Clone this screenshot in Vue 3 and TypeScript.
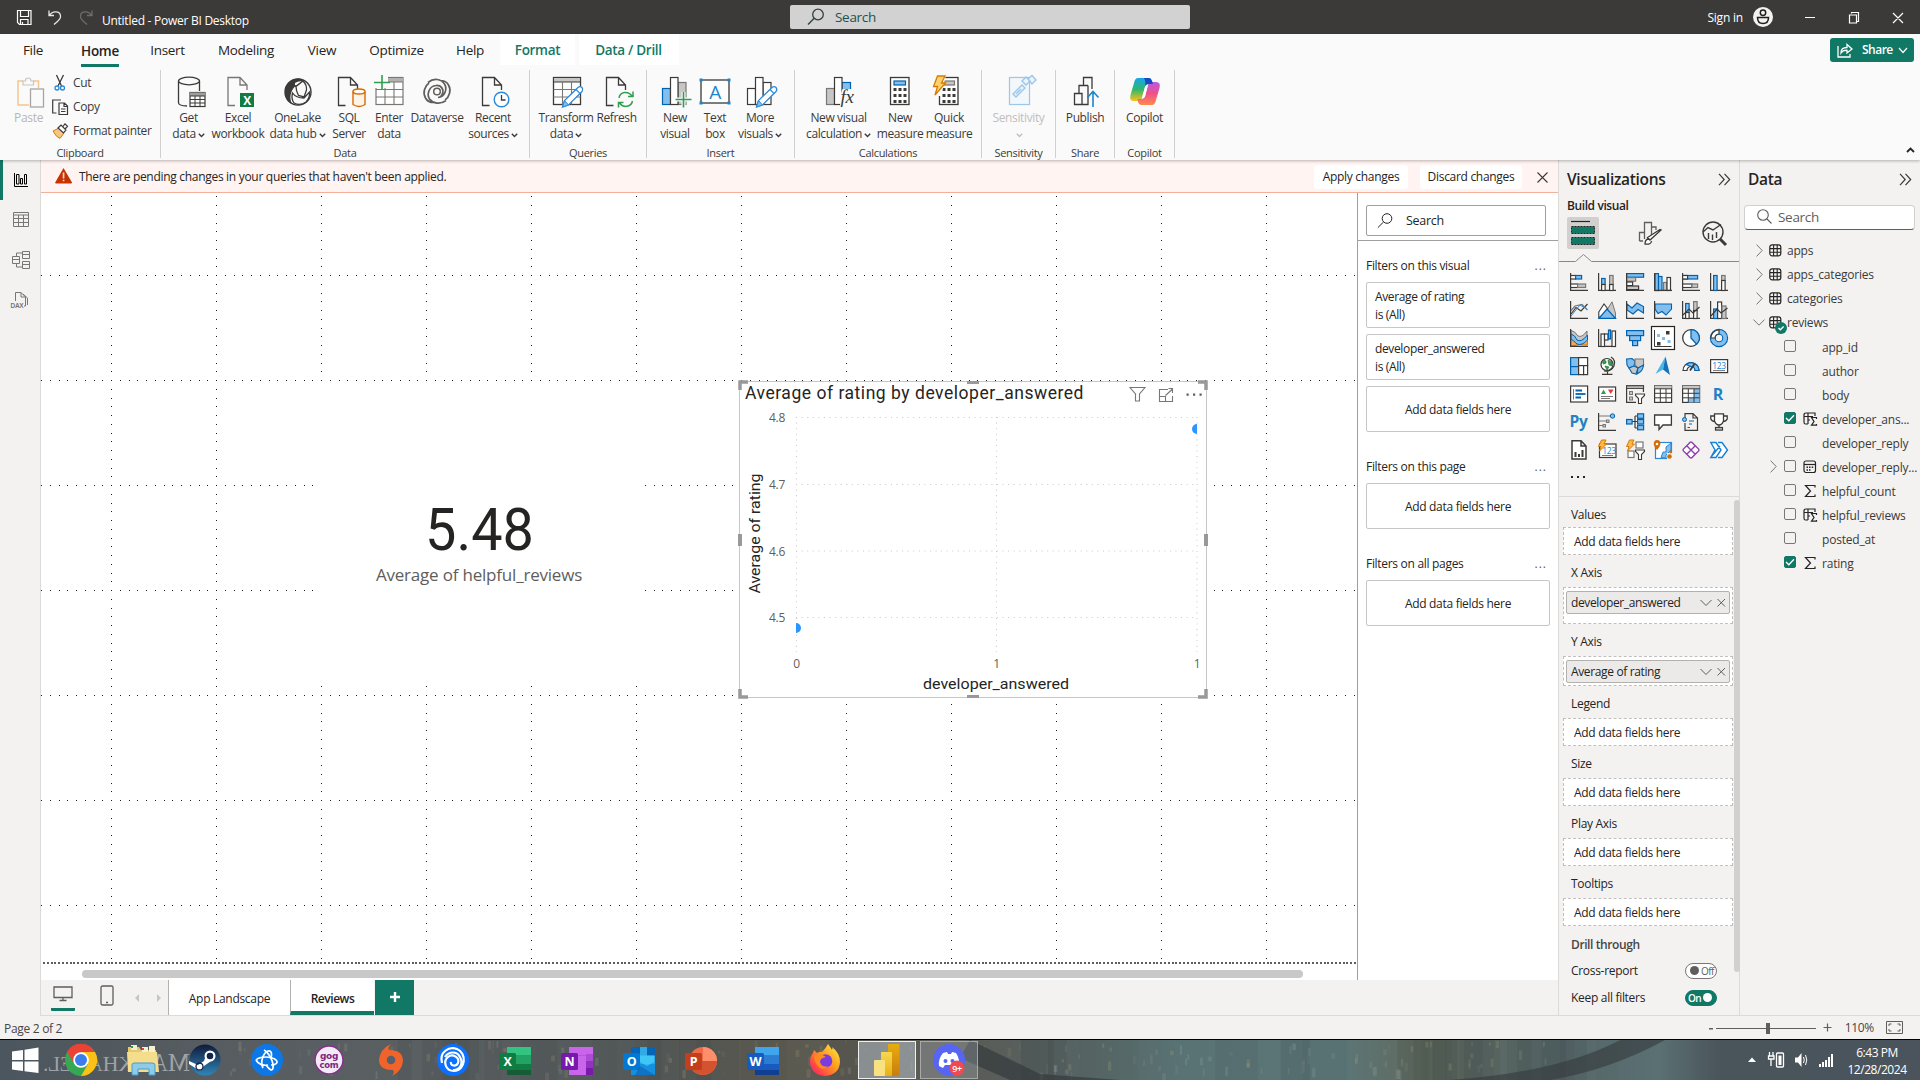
<script setup lang="ts">
interface RibbonButton { label: string[]; icon: string; w: number; caret?: boolean; off?: boolean }
interface RibbonGroup { name: string; w: number; pad: number; buttons: RibbonButton[] }
interface Field { name: string; checked?: boolean; icon?: string; expand?: boolean }
interface Well { label: string; value?: string; h: number }

const K = '#3b3a39'
const BL = '#83beec'
const BD = '#0063b1'
const GR = '#c8c6c4'
const GD = '#797775'

const rc = (x: number, y: number, w: number, h: number, f = 'none', s = K, sw = 1.2): string =>
  `<rect x="${x}" y="${y}" width="${w}" height="${h}" fill="${f}" stroke="${s}" stroke-width="${sw}"/>`
const ln = (d: string, s = K, sw = 1.2, f = 'none'): string =>
  `<path d="${d}" fill="${f}" stroke="${s}" stroke-width="${sw}"/>`

const sheet = (x: number, c = K): string => ln(`M${x + 7} 29.5H${x}V1.5H${x + 12}L${x + 19} 9V14M${x + 12} 1.5V9H${x + 19}`, c, 1.3)
const pencil = ln('M12.5 31L14.5 24.5L28 11.5Q30 9.7 32 11.5Q33.5 13.5 32 15.5L18.5 29Z', '#2b88d8', 1.3, '#fff') + ln('M12.5 31L14.5 24.5L18.5 29Z', '#2b88d8', 1, '#83beec') + ln('M26 13.5L30 17.5', '#2b88d8', 1.1)

const big: Record<string, string> = {
  get:
    ln('M5.5 5V27Q6 29.8 14 30M26.5 5V15', K, 1.3) + '<ellipse cx="16" cy="5" rx="10.5" ry="3.8" fill="#fafafa" stroke="#3b3a39" stroke-width="1.3"/>' +
    rc(17, 16.5, 15, 14, '#fff', K, 1.2) + '<rect x="17" y="16.5" width="15" height="3.5" fill="#a19f9d"/>' + ln('M17 20H32M17 23.5H32M17 27H32M22 20V30.5M27 20V30.5', K, 1),
  excel: sheet(6, GD) + '<rect x="18" y="17" width="14" height="14" fill="#107c41"/><text x="25" y="28.5" text-anchor="middle" font-family="Open Sans" font-weight="700" font-size="12" fill="#fff">X</text>',
  lake:
    '<circle cx="16" cy="16" r="13" fill="#fafafa" stroke="#3b3a39" stroke-width="1.4"/><path d="M16 2.5C8 3 3 9 3 16C3 22 6 26.5 10 28C7 22 8.5 15 13 10.500L21 4.500C19.500 3 18 2.500 16 2.500Z" fill="#3b3a39"/><path d="M12.500 6.500Q17 3.500 21 5L13.500 10.500Q11.500 9 12.500 6.500ZM14 10.500L21 5Q25 9 24.500 14L22 21L16.500 19.500Q14 15 14 10.500ZM10.500 17Q14 22 22 22L27.500 16Q28 22 24 26Q18 30 12 27Q9 23 10.500 17Z" fill="#fafafa" stroke="#3b3a39" stroke-width="1.3"/>',
  sql: sheet(5.5) + ln('M20 15.5V28.5Q26 32.5 32 28.5V15.5', '#d86b00', 1.4, '#fdf3e8') + '<ellipse cx="26" cy="15.5" rx="6" ry="2.5" fill="#fff" stroke="#d86b00" stroke-width="1.4"/>',
  enter:
    rc(3, 1.5, 27, 27, '#fff', GD) + '<rect x="9" y="2" width="21" height="4" fill="#b3b0ad"/>' + ln('M3 6H30M3 13.5H30M3 21H30M12 6V28.5M21 6V28.5', GD, 1.1) + '<path d="M1 0H15V12H1Z" fill="#fafafa"/>' + ln('M9 -1V14M1 6.5H17', '#2f9e4f', 1.6),
  dv:
    ln('M25 24.5C19 29 12 27.5 8.500 23C5.500 18.500 8 10 15 9.500M7 6.500C13 1.500 20 3 23.500 8C26.500 13 24 21 17 21.500M15 9.500C20 9 23 13 21.500 17.500C20.500 20.500 18.500 21.500 17 21.500M8 7C3.500 10 1.500 17 4.500 22C6 25 9.500 26.500 13 26.500M24 24C28.500 21 30.500 14 27.500 9C26 6 22.500 4.500 19 4.500', '#605e5c', 1.7) + '<circle cx="16" cy="15.5" r="3.3" fill="none" stroke="#605e5c" stroke-width="1.5"/>',
  recent: sheet(5.5) + '<circle cx="24.5" cy="23.5" r="7.3" fill="#fff" stroke="#2b88d8" stroke-width="1.4"/>' + ln('M24.5 19V24H28.5', K, 1.3),
  transform:
    rc(3.5, 1.5, 27, 27, '#fff', K, 1.3) + '<rect x="3.5" y="1.5" width="27" height="4.5" fill="#c8c6c4" stroke="#3b3a39" stroke-width="1"/>' + ln('M3.5 13.5H30.5M3.5 21H30.5M12.5 6V28.5M21.5 6V28.5', GD, 1.1) + pencil,
  refresh: sheet(5.5) + '<path d="M16 15H33V32H16Z" fill="#fafafa"/>' + ln('M18 22C19 15.5 27 14.5 31 20M32 15.5V20.5H27M31.5 25C30 31.5 22 32 18.5 27M17.5 31.5V26.5H22.5', '#2f9e4f', 1.5),
  newv: rc(3.5, 12.5, 8, 16, BL, BD) + rc(19, 6.5, 8, 22, GR, GD) + rc(11.5, 1.5, 7.5, 27, '#fff', K) + ln('M24.5 16V31.5M16.5 23.5H32.5', '#fafafa', 4) + ln('M24.5 16V31.5M16.5 23.5H32.5', '#2f9e4f', 1.6),
  text: rc(2, 4, 28, 23, '#fff', K, 1.3) + '<path d="M0.5 2.5h3v3h-3zM28.5 2.5h3v3h-3zM0.5 25.5h3v3h-3zM28.5 25.5h3v3h-3z" fill="#1a86d0"/><text x="16" y="22.500" text-anchor="middle" font-family="Open Sans" font-size="19" fill="#1a86d0">A</text>',
  morev: rc(3.5, 12.5, 8, 16, '#fff', K) + rc(19, 6.5, 8, 22, '#fff', K) + rc(11.5, 1.5, 7.5, 27, '#fff', K) + pencil,
  calc: rc(3.5, 12.5, 8, 16, GR, GD) + rc(19, 6.5, 8.5, 11, BL, BD) + rc(11.5, 1.5, 7.5, 27, '#fff', K) + '<path d="M19.500 13H32V31H17V20Z" fill="#fafafa"/><text x="17.500" y="27" font-family="Liberation Serif" font-style="italic" font-size="19" fill="#3b3a39">fx</text>',
  meas: rc(6.5, 1.5, 18.5, 27, '#fff', K, 1.3) + rc(10, 5, 11.5, 4, BL, BD, 1.2) + '<path d="M9.5 12h3v3h-3zM14.5 12h3v3h-3zM19.5 12h3v3h-3zM9.5 18h3v3h-3zM14.5 18h3v3h-3zM19.5 18h3v3h-3zM9.5 24h3v3h-3zM14.5 24h3v3h-3zM19.5 24h3v3h-3z" fill="#3b3a39"/>',
  quick: rc(6.5, 1.5, 18.5, 27, '#fff', K, 1.3) + rc(11, 5, 10.5, 4, GR, GD, 1.2) + '<path d="M9.5 12h3v3h-3zM14.5 12h3v3h-3zM19.5 12h3v3h-3zM9.5 18h3v3h-3zM14.5 18h3v3h-3zM19.5 18h3v3h-3zM9.5 24h3v3h-3zM14.5 24h3v3h-3zM19.5 24h3v3h-3z" fill="#3b3a39"/><path d="M-1 -1H13L8 20H0Z" fill="#fafafa"/>' + ln('M4.5 0H12L8.5 7H12.5L2 19L4.5 10.5H0.5Z', '#d87a00', 1.3, '#fdd26e'),
  sens: '<g opacity=".45">' + rc(6.5, 1.5, 20, 27, '#e8f4fc', '#2b88d8') + ln('M10 18L19 9L22 12L13 21ZM19 5L23 1L27 5L23 9ZM25 3L29 -0.5L33 4L29 8ZM13 18L18 13', '#2b88d8', 1.4, '#dceefb') + '</g>',
  publish: ln('M5.5 28.5V17.5H13V28.5ZM10 17V9.5H19M19 9.5V28.5H13M14.5 9V1.5H23V13', K, 1.3) + ln('M24 31V16M18.5 21.5L24 15.5L29.5 21.5', '#1a86d0', 1.6),
  copilot:
    '<defs><linearGradient id="cpa" x1="0" y1="0" x2="0" y2="1"><stop offset="0" stop-color="#18a5e8"/><stop offset=".5" stop-color="#2fb86c"/><stop offset="1" stop-color="#ffc21a"/></linearGradient><linearGradient id="cpb" x1="0" y1="0" x2="0" y2="1"><stop offset="0" stop-color="#b55be0"/><stop offset=".5" stop-color="#f0508a"/><stop offset="1" stop-color="#ff8a4a"/></linearGradient></defs><path d="M9 2H20Q22 2 23 5L24 8H20Q17 8 16 11L13 22Q12 25 9 25H5Q0 25 1.5 19L5 7Q6 2 9 2Z" fill="url(#cpa)"/><path d="M23 29H12Q10 29 9 26L8.5 23H12Q15 23 16 20L19 9Q20 6 23 6H27Q32 6 30.5 12L27 24Q26 29 23 29Z" fill="url(#cpb)"/><path d="M15 2H20Q22 2 23 5L24 8H20Q17 8 16 10Q17 5 15 2Z" fill="#1648c8"/><path d="M13.5 20L16 11Q17 8.500 19 8.500L16.500 19Q15.500 22.500 13 22.500Z" fill="#fff"/>',
}

const groups: RibbonGroup[] = [
  { name: 'Data', w: 368, pad: 4, buttons: [
    { label: ['Get', 'data'], icon: 'get', w: 47, caret: true }, { label: ['Excel', 'workbook'], icon: 'excel', w: 52 },
    { label: ['OneLake', 'data hub'], icon: 'lake', w: 67, caret: true }, { label: ['SQL', 'Server'], icon: 'sql', w: 36 },
    { label: ['Enter', 'data'], icon: 'enter', w: 44 }, { label: ['Dataverse'], icon: 'dv', w: 52 },
    { label: ['Recent', 'sources'], icon: 'recent', w: 60, caret: true }] },
  { name: 'Queries', w: 116, pad: 10, buttons: [
    { label: ['Transform', 'data'], icon: 'transform', w: 52, caret: true }, { label: ['Refresh'], icon: 'refresh', w: 49 }] },
  { name: 'Insert', w: 147, pad: 7, buttons: [
    { label: ['New', 'visual'], icon: 'newv', w: 42 }, { label: ['Text', 'box'], icon: 'text', w: 38 },
    { label: ['More', 'visuals'], icon: 'morev', w: 52, caret: true }] },
  { name: 'Calculations', w: 186, pad: 6, buttons: [
    { label: ['New visual', 'calculation'], icon: 'calc', w: 75, caret: true }, { label: ['New', 'measure'], icon: 'meas', w: 48 },
    { label: ['Quick', 'measure'], icon: 'quick', w: 50 }] },
  { name: 'Sensitivity', w: 73, pad: 0, buttons: [{ label: ['Sensitivity', ''], icon: 'sens', w: 73, caret: true, off: true }] },
  { name: 'Share', w: 58, pad: 0, buttons: [{ label: ['Publish'], icon: 'publish', w: 58 }] },
  { name: 'Copilot', w: 59, pad: 0, buttons: [{ label: ['Copilot'], icon: 'copilot', w: 59 }] },
]

const ax = ln('M.6 0V17.4H18', K, 1.2)
const bolt = ln('M3.5 -1H8L6 3H8.5L1.5 10L3 5.5H.5Z', '#d87a00', 1, '#fdb94e')
const funnel = ln('M9.5 9H18.5V10.5L15.5 13.5V18.5H12.5V13.5L9.5 10.5Z', K, 1.1, '#fff')

const visuals: string[] = [
  ax + rc(.6, 2.5, 5, 3.5, '#fff') + rc(5.6, 2.5, 6, 3.5, BL, BD) + rc(.6, 11, 7, 3.5, '#fff') + rc(7.6, 11, 8, 3.5, GR, GD),
  ax + rc(3.6, 5.5, 3.5, 6, BL, BD) + rc(3.6, 11.5, 3.5, 6, '#fff') + rc(11.6, 2.5, 3.5, 9, GR, GD) + rc(11.6, 11.5, 3.5, 6, '#fff'),
  rc(.6, .6, 17, 3.6, BL, BD) + rc(.6, 4.6, 9, 3.6, GR, GD) + rc(.6, 9, 6, 3.6, '#fff') + rc(.6, 13, 12, 3.6, GR, K) + ax,
  rc(1, .6, 3.5, 17, BL, BD) + rc(4.5, 3.5, 3.5, 14, BL, BD) + rc(9.5, 9.5, 3.5, 8, GR, GD) + rc(13, 4.5, 3.5, 13, '#fff') + ax,
  ax + rc(.6, 2.5, 15, 3.5, BL, BD) + rc(.6, 2.5, 5, 3.5, '#fff') + rc(.6, 11, 9.5, 3.5, '#fff') + rc(10, 11, 5.6, 3.5, GR, GD),
  ax + rc(3.6, 2.5, 3.5, 15, BL, BD) + rc(11.6, 2.5, 3.5, 5, GR, GD) + rc(11.6, 7.5, 3.5, 10, '#fff'),
  ax + ln('M1 13L6 6.5L11 10L17.5 3', K) + ln('M1 9.5L5 5L12 3.5L17.5 9', GD) + ln('M1 15L5 10L10 4L17 8', '#2b88d8', 1),
  ln('M9.5 8L14 .8L17.5 12V17.4H14Z', GD, 1, GR) + ln('M.8 11L6 3L9.5 7.5L7 12L.8 17Z', K, 1.1, '#fff') + ln('M1 17.4L9 8L17.5 17.4Z', BD, 1.2, BL),
  ln('M1 3L6 7L11 2L17.5 5.5V12L12 8.5L7 13L1 9Z', BD, 1.1, BL) + ax,
  ln('M1 3H17.5V8L12 14L8 10.5L4 12.5L1 8Z', BD, 1.1, BL) + ax,
  ax + rc(3.6, 2.5, 3.5, 9, BL, BD) + rc(11.6, .6, 3.5, 9, GR, GD) + rc(3.6, 11.5, 3.5, 6, '#fff') + rc(11.6, 9.5, 3.5, 8, '#fff') + ln('M1 14L7 8L11 12L17.5 6', K),
  ax + rc(3.6, 8, 4, 9.5, BL, BD) + rc(7.6, 1, 4, 16.5, '#fff') + rc(12, 5, 4, 12.5, GR, GD) + ln('M1 15L7 8L11 12L17.5 7', K),
  ln('M1 1.5Q5 2 8 7Q12 9 17 2V7Q13 13 9 12Q5 11 1 7Z', GD, 1, GR) + ln('M1 9Q6 9 8 14Q12 16 17.5 9V16Q10 15 1 17Z', '#d87a00', 1, '#f7a94a') + ln('M1 5Q5 6 7 11Q11 14 17.5 6V11Q12 17 7 15Q4 12 1 10Z', BD, 1, BL) + ax,
  ax + rc(3, 5, 3.5, 12.5, '#fff') + rc(6.5, 5, 3.5, 6, '#fff') + rc(10.5, 1, 2, 9, BL, BD) + rc(14, 2, 3.5, 15.5, '#fff'),
  rc(.6, 1.6, 17, 5, BL, BD) + rc(3.6, 6.6, 11, 5, BL, BD) + rc(6.6, 11.6, 5, 5, BL, BD),
  rc(-2.5, -2.5, 23, 23, '#fff', '#252423', 1.2) + '<path d="M.5 1V17.5H17.5" fill="none" stroke="#3b3a39"/><path d="M12 2h3.5v3.5h-3.5zM3 13h3.5v3.5h-3.5z" fill="#3b3a39"/><path d="M3 5h3v3h-3zM8 8h3v3h-3zM13.5 11h3v3h-3z" fill="#83beec"/>',
  '<circle cx="9" cy="9" r="8.3" fill="#fff" stroke="#3b3a39" stroke-width="1.3"/>' + ln('M9 .7A8.3 8.3 0 0 1 14.5 15.2L9 9Z', BD, 1.3, BL),
  '<circle cx="9" cy="9" r="6.2" fill="none" stroke="#0063b1" stroke-width="6"/><circle cx="9" cy="9" r="6.2" fill="none" stroke="#83beec" stroke-width="3.8"/>' + ln('M9 .8A8.2 8.2 0 0 0 .8 9H5A4 4 0 0 1 9 5Z', K, 1.2, '#fff'),
  rc(.6, .6, 8, 9, BL, BD) + rc(.6, 9.6, 8, 8, BL, BD) + rc(8.6, .6, 9, 8, '#fff') + rc(8.6, 8.6, 5, 9, '#fff') + rc(13.6, 8.6, 4, 9, '#fff'),
  '<circle cx="9" cy="7.5" r="6" fill="#fff" stroke="#3b3a39" stroke-width="1.2"/><path d="M6 3Q9 4 8 6Q5 8 4.5 6ZM10 3L14 5L14 9L11 8ZM7 9L11 10L9 13Z" fill="#2f9e4f" stroke="#2f7e3f" stroke-width=".8"/>' + ln('M13 0Q18 3 16 9Q13 15 6 14M9.5 14V17M4 17.4H14.5', K),
  ln('M.6 2L6 1.5L9 4L8 9L3 11L1 8Z', BD, 1.1, BL) + ln('M9 2H17.5V9L12 11L9 8Z', GD, 1.1, GR) + ln('M3 11L8 9L12 11L10 17L6 16Z', BD, 1.1, GR) + ln('M12 11L17.5 8Q17 13 14 15L11 17Z', BD, 1.1, BL),
  '<path d="M11.5 -.5L1.5 17L9 12.5Z" fill="#4bb8e8"/><path d="M11.5 -.5L9 12.5L16 18Z" fill="#1372b8"/>',
  ln('M1 13.5A8 8 0 0 1 17 13.5H13A4 4 0 0 0 5 13.5Z', K, 1.2, '#fff') + ln('M4 7.5A8 8 0 0 1 17 13.5H13A4 4 0 0 0 9 9.5Z', BD, 1.1, BL) + ln('M8 13.5L12.5 7', K, 1.8),
  rc(.6, 2.6, 17, 13, '#fff', K) + '<text x="9" y="11.8" text-anchor="middle" font-family="Open Sans" font-size="8.5" fill="#1a86d0">123</text>' + ln('M3 13.6H15', GD, 1),
  rc(.6, 1, 17, 16, '#fff', K) + ln('M3.5 4V14.5', GD, 1) + ln('M5.5 5.5H12M5.5 12.5H11', BD, 1.8) + ln('M5.5 9H15.5', BD, 1.8),
  rc(.6, 2, 17, 14, '#fff', K) + '<path d="M3 9L5.500 4.500L8 9Z" fill="#2f9e4f"/><path d="M10 4.500H15.500L12.800 9Z" fill="#e0393e"/>' + ln('M3 11.5H15M3 13.5H12', GD, 1),
  ln('M10 17.4H.6V.8H17.4V7', K) + '<rect x=".6" y=".8" width="17" height="2.6" fill="#c8c6c4" stroke="#3b3a39"/>' + rc(3.5, 6.5, 3, 3, GR, GD, 1) + rc(3.5, 12, 3, 3, GR, GD, 1) + funnel,
  rc(.6, .8, 17, 16.6, '#fff', K) + '<rect x=".6" y=".8" width="17" height="3" fill="#c8c6c4"/>' + ln('M.6 3.8H17.6M.6 8.3H17.6M.6 12.8H17.6M6.3 3.8V17.4M12 3.8V17.4', K, 1),
  rc(.6, .8, 17, 16.6, '#fff', K) + '<rect x=".6" y=".8" width="17" height="3" fill="#c8c6c4"/><path d="M6.3 13H12V4H17.6V17.4H6.3Z" fill="#83beec"/>' + ln('M.6 3.8H17.6M.6 8.3H17.6M.6 12.8H17.6M6.3 3.8V17.4M12 3.8V17.4', K, 1),
  '<text x="8" y="14.500" text-anchor="middle" font-family="Open Sans" font-weight="700" font-size="16" fill="#2482c4">R</text>',
  '<text x="8.500" y="14" text-anchor="middle" font-family="Open Sans" font-weight="700" font-size="15.500" fill="#2482c4">Py</text>',
  ax + ln('M1 3H13M1 8H9M1 12.5H5', GD, 1) + '<circle cx="14.5" cy="3" r="2.2" fill="#83beec" stroke="#0063b1"/>' + rc(8.5, 7, 2.5, 2.5, GR, GD, 1) + rc(5, 11.5, 2.5, 2.5, GR, GD, 1),
  ln('M6 8.5H12M9 3V15M9 3H12M9 15H12', K) + rc(.6, 6.5, 5.5, 4.5, BL, BD) + rc(11.6, .8, 6, 4.5, BL, BD) + rc(11.6, 6.5, 6, 4.5, BL, BD) + rc(11.6, 12.3, 6, 4.5, BL, BD),
  ln('M.6 2H17.4V12H9L5 16.5V12H.6Z', K, 1.3, '#fff'),
  ln('M3 6V.6H11L15.5 5V17.4H3V10M11 .6V5H15.5', K) + '<circle cx="2.5" cy="6.5" r="2" fill="#83beec" stroke="#0063b1"/>' + ln('M7 8H12M7 11H10M5.5 14.5H8', BD, 1.2),
  ln('M4.5 .8H13.5V8Q12 12 9 12Q6 12 4.5 8ZM4.5 3H.8V6Q2 8.5 5 8.5M13.5 3H17.2V6Q16 8.5 13 8.5M9 12V15', K, 1.3, '#fff') + rc(5.5, 14.5, 7, 2.6, GR, K),
  ln('M2 18V-.2H11L16 5V18ZM11 -.2V5H16', K, 1.5, '#fff') + '<path d="M4.500 11h2v5h-2zM8 13h2v3h-2zM11.500 9h2v7h-2z" fill="#3b3a39"/>',
  rc(1.5, 3, 16.5, 13.5, '#fff', K) + '<text x="11" y="12.500" text-anchor="middle" font-family="Open Sans" font-size="8.500" fill="#1a86d0">123</text>' + ln('M4 14.5H15', GD, 1) + bolt,
  rc(10, 1, 7, 6, '#fff', GD) + rc(2, 10, 6, 6.5, '#fff', GD) + bolt + funnel,
  rc(1.5, 1.5, 16, 16, '#fff', '#2b88d8') + ln('M7 16.5L9 11H12V6L17 2V9L12 14V17Z', '#2b88d8', 1, BL) + '<path d="M3 -1Q6.5 -1 6.5 3Q6 6 3 9Q0 6 -.3 3Q0 -1 3 -1Z" fill="#d86b00"/><circle cx="3" cy="3" r="1.3" fill="#fff"/><path d="M13 12h6v7h-6z" fill="#f3f2f1"/><circle cx="15.5" cy="15.5" r="2.3" fill="#d86b00"/><circle cx="16.5" cy="11" r="1.4" fill="#d86b00"/>',
  ln('M7 2.5Q9 -.5 11 2.500L15.500 7Q18.500 9 15.500 11L11 15.500Q9 18.500 7 15.500L2.500 11Q-.5 9 2.500 7ZM5 5L13 13M13 5L5 13', '#8a3ea8', 1.4, '#fff'),
  ln('M.8 1.5H6L11 9L6 16.5H.8L5 9ZM8 1.5H12L17.5 9L12 16.5H8M1 16L10 5', '#1580d8', 1.4, '#fff'),
]

const tables = ['apps', 'apps_categories', 'categories']
const fields: Field[] = [
  { name: 'app_id' }, { name: 'author' }, { name: 'body' }, { name: 'developer_ans...', checked: true, icon: 'calc' },
  { name: 'developer_reply' }, { name: 'developer_reply...', icon: 'date', expand: true }, { name: 'helpful_count', icon: 'sum' },
  { name: 'helpful_reviews', icon: 'calc' }, { name: 'posted_at' }, { name: 'rating', checked: true, icon: 'sum' },
]
const fieldIcons: Record<string, string> = {
  sum: ln('M12 3.5V1.5H2.5L7.5 7L2.5 12.5H12V10.5', '#252423', 1.2),
  calc: ln('M5 12H2.5Q1 12 1 10V3Q1 1 3 1H12V4M1.5 4.5H10M5 1V12M5 8H7', '#252423', 1.2) + ln('M13.5 7V5.5H8.5L11 9.5L8.5 13.2H13.5V12', '#252423', 1.2),
  date: '<rect x="1" y="1" width="11.5" height="11.5" rx="2" fill="none" stroke="#252423" stroke-width="1.2"/>' + ln('M1 4.5H12.5', '#252423', 1.2) + '<path d="M3.5 6.5h1.5v1.5h-1.5zM6 6.5h1.5v1.5h-1.5zM8.7 6.5h1.5v1.5h-1.5zM3.5 9.3h1.5v1.5h-1.5zM6 9.3h1.5v1.5h-1.5z" fill="#252423"/>',
}
const tableIcon = '<rect x=".8" y=".8" width="11" height="11" rx="2.3" fill="none" stroke="#252423" stroke-width="1.2"/><path d="M4.6 1V12M8.2 1V12M1 4.6H12M1 8.2H12" stroke="#252423" stroke-width="1.1"/>'

const wells: Well[] = [
  { label: 'Values', h: 28 }, { label: 'X Axis', value: 'developer_answered', h: 37 },
  { label: 'Y Axis', value: 'Average of rating', h: 30 }, { label: 'Legend', h: 28 },
  { label: 'Size', h: 28 }, { label: 'Play Axis', h: 28 }, { label: 'Tooltips', h: 28 },
]
const filterSections = [
  { title: 'Filters on this visual', cards: ['Average of rating', 'developer_answered'] },
  { title: 'Filters on this page', cards: [] as string[] },
  { title: 'Filters on all pages', cards: [] as string[] },
]

// Snap-to-grid dots: 105px cells split in twelve steps.
const step = 105 / 12
const dots: string[] = []
for (let gx = 70; gx < 1316; gx += 105)
  for (let i = 0; i < 88; i++) dots.push(`M${gx} ${Math.round(3.25 + i * step)}h1v1h-1z`)
for (let gy = 82; gy < 768; gy += 105)
  for (let i = 0; i < 151; i++) dots.push(`M${Math.round(i * step)} ${gy}h1v1h-1z`)
const gridPath = dots.join('')

const office = (c1: string, c2: string, c3: string, c4: string, badge: string, letter: string): string =>
  `<path d="M8 3h24v8.5h-24z" fill="${c1}"/><path d="M8 11.5h24v8.5h-24z" fill="${c2}"/><path d="M8 20h24v6h-24z" fill="${c3}"/><path d="M8 26h24v5h-24z" fill="${c4}"/><rect x="0" y="9" width="17" height="17" rx="1.5" fill="${badge}"/><text x="8.5" y="22" text-anchor="middle" font-family="Open Sans" font-weight="700" font-size="12.5" fill="#fff">${letter}</text>`

const apps: { name: string; svg: string; state?: string }[] = [
  { name: 'start', svg: '<path d="M3 7.5L14 6V16H3ZM15.5 5.8L29.5 3.5V16H15.5ZM3 17.5H14V27L3 25.5ZM15.5 17.5H29.5V29L15.5 27.2Z" fill="#fff"/>' },
  { name: 'chrome', svg: '<circle cx="16" cy="16" r="16" fill="#34a853"/><path d="M2 8A16 16 0 0 1 30 8H16Z" fill="#ea4335"/><path d="M2 8L9.5 20L16 16V8Z" fill="#ea4335"/><path d="M30 8A16 16 0 0 1 16 32L23 20L22 8Z" fill="#fbc116"/><path d="M16 8H30L23 20Z" fill="#fbc116"/><circle cx="16" cy="16" r="7.8" fill="#fff"/><circle cx="16" cy="16" r="6" fill="#3b7ded"/>' },
  { name: 'explorer', svg: '<path d="M1 3H12L14 6H29V28H1Z" fill="#e5c96a"/><path d="M4 1H10V6H4ZM15 3H21V8H15ZM22 2H28V9H22Z" fill="#f5f0d0"/><path d="M4 2h2v2h-2z" fill="#25a045"/><path d="M15 4h2v2h-2z" fill="#d44"/><path d="M0 8H30L32 28H1Z" fill="#f4dd8c"/><path d="M5 31V21Q5 19 7 19H25Q28 19 28 21V31H22V25H11V31Z" fill="#8ccbea" stroke="#4a9cc8"/>' },
  { name: 'steam', svg: '<defs><linearGradient id="stm" x1="0" y1="0" x2="0" y2="1"><stop offset="0" stop-color="#101a3a"/><stop offset="1" stop-color="#2f86b8"/></linearGradient></defs><circle cx="16" cy="16" r="15.5" fill="url(#stm)"/><path d="M0 17L9 21L15 17L17 11L24 9L25 15L15 22L11 27L0 20Z" fill="#fff"/><circle cx="21" cy="12" r="5.5" fill="#fff"/><circle cx="21" cy="12" r="3.3" fill="#16244a"/><circle cx="10.5" cy="22.5" r="3.5" fill="none" stroke="#16244a" stroke-width="1.3"/>' },
  { name: 'battle', svg: '<circle cx="16" cy="16" r="16" fill="#0c78e8"/><g fill="none" stroke="#fff" stroke-width="1.7"><path d="M5 16C9 12 20 12 25 16C28 19 24 21 20 21"/><path d="M13 6C17 8 23 17 22 24C21 28 18 25 15 21"/><path d="M12 24C9 18 12 9 17 7C21 6 21 11 20 14"/><path d="M5 16C7 20 12 22 17 21"/></g>' },
  { name: 'gog', svg: '<circle cx="16" cy="16" r="14" fill="#f4e9f6" stroke="#86328a" stroke-width="1.5"/><text x="16" y="15" text-anchor="middle" font-family="DejaVu Sans" font-weight="700" font-size="9" fill="#7a2a80">gog</text><text x="16" y="23.5" text-anchor="middle" font-family="DejaVu Sans" font-weight="700" font-size="8.500" fill="#7a2a80">com</text>' },
  { name: 'origin', svg: '<path d="M16 0Q12 4 14 6Q28 6 28 17Q27 27 17 32Q20 28 18 26Q4 26 4 16Q5 5 16 0Z" fill="#f0642c"/><circle cx="16" cy="16" r="4.3" fill="#56606a"/>' },
  { name: 'ubisoft', svg: '<circle cx="16" cy="16" r="16" fill="#0b70ff"/><path d="M5 19C2 8 12 2 20 5C30 9 29 26 17 27C8 27 6 17 11 13C16 9 23 14 21 19C19 23 13 22 14 18M8 13C12 7 20 7 23 13C27 20 22 27 16 26" fill="none" stroke="#fff" stroke-width="2.2"/>' },
  { name: 'excel', svg: office('#33c481', '#21a366', '#107c41', '#185c37', '#107c41', 'X') },
  { name: 'onenote', svg: office('#ca64ea', '#ca64ea', '#ca64ea', '#ca64ea', '#7719aa', 'N') + '<path d="M25 10h7v7h-7z" fill="#ae4bd5"/><path d="M25 17h7v7h-7z" fill="#9332bf"/><path d="M25 24h7v7h-7z" fill="#7719aa"/>' },
  { name: 'outlook', svg: office('#0364b8', '#28a8ea', '#1490df', '#1490df', '#0078d4', 'O') + '<path d="M17 3h7v8.5h7V18L24 22L17 18Z" fill="#50d9ff" opacity=".6"/><path d="M17 22L32 31H12Z" fill="#1066b5" opacity=".7"/>' },
  { name: 'powerpoint', svg: '<circle cx="18" cy="17" r="14" fill="#ed6c47"/><path d="M18 3A14 14 0 0 1 32 17H18Z" fill="#ff8f6b"/><path d="M4.5 17H32A14 14 0 0 1 5 22Z" fill="#d35230"/><rect x="0" y="9" width="17" height="17" rx="1.5" fill="#c43e1c"/><text x="8.5" y="22" text-anchor="middle" font-family="Open Sans" font-weight="700" font-size="12.5" fill="#fff">P</text>' },
  { name: 'word', svg: office('#41a5ee', '#2b7cd3', '#185abd', '#103f91', '#185abd', 'W') },
  { name: 'firefox', svg: '<defs><linearGradient id="ffx" x1="1" y1="0" x2="0" y2="1"><stop offset="0" stop-color="#fff04a"/><stop offset=".45" stop-color="#ff9a1e"/><stop offset=".8" stop-color="#ff3d4e"/><stop offset="1" stop-color="#e0208a"/></linearGradient></defs><path d="M19 0Q22 4 23 6Q24 4 23 3Q31 9 31 18Q30 31 16 32Q2 31 1 18Q1 12 4 9L5 6L8 9Q12 7 13 8Q17 4 19 0Z" fill="url(#ffx)"/><circle cx="16.5" cy="17" r="6.8" fill="#7a3ce0"/><path d="M5 12Q11 8 17 13Q11 14 11 18Q13 24 20 22Q13 28 8 21Q5 17 5 12Z" fill="#ff8a1e"/>' },
  { name: 'powerbi', state: 'active', svg: '<defs><linearGradient id="pb1" x1="0" y1="0" x2="0" y2="1"><stop offset="0" stop-color="#e8ac0c"/><stop offset="1" stop-color="#c87c10"/></linearGradient><linearGradient id="pb2" x1="0" y1="0" x2="0" y2="1"><stop offset="0" stop-color="#f8d850"/><stop offset="1" stop-color="#e8b010"/></linearGradient></defs><rect x="17" y="0" width="11.5" height="32" rx="1" fill="url(#pb1)"/><rect x="10" y="8" width="11" height="24" rx="1" fill="url(#pb2)"/><rect x="3" y="16" width="11" height="16" rx="1" fill="#f9e080"/>' },
  { name: 'discord', state: 'open', svg: '<circle cx="16" cy="16" r="16" fill="#5865f2"/><path d="M10 9L14 8L15 10H18L19 8L23 9Q27 15 26 22L22 24L20 21H12L10 24L6 22Q5 15 10 9Z" fill="#fff"/><circle cx="12.5" cy="17" r="2" fill="#5865f2"/><circle cx="19.5" cy="17" r="2" fill="#5865f2"/><circle cx="24" cy="24" r="7.5" fill="#f04a50"/><text x="24" y="27.5" text-anchor="middle" font-family="Open Sans" font-weight="600" font-size="9" fill="#fff">9+</text>' },
]

// City skyline behind the taskbar: tall blocks and lit windows.
let seed = 7
const rnd = (): number => (seed = (seed * 16807) % 2147483647) / 2147483647
const lights = Array.from({ length: 150 }, () => ({
  x: 230 + rnd() * 1320, y: rnd() * 34, w: 1.5 + rnd() * 2.5, h: 3 + rnd() * 7, o: 0.05 + rnd() * 0.15, c: rnd() > 0.45 ? '#c9b487' : '#a9c4bf',
}))
const blocks = Array.from({ length: 30 }, () => ({ x: 380 + rnd() * 1240, w: 12 + rnd() * 50, o: 0.03 + rnd() * 0.09 }))

const yTicks = [{ v: '4.8', y: 36.5 }, { v: '4.7', y: 103.5 }, { v: '4.6', y: 170 }, { v: '4.5', y: 236.5 }]
</script>

<template>
  <div class="app">
    <header class="titlebar">
      <svg class="save" width="16" height="17" viewBox="0 0 16 17" v-html="ln('M1.5 1.5H15V15.5H3.5L1.5 13.5ZM4.5 1.5V7.5H12.5V1.5M4.5 15.5V10.5H12V15.5M6.5 13V15.5', '#fff', 1.2)" />
      <svg class="undo" width="16" height="17" viewBox="0 0 16 17" v-html="ln('M2 1.5V6.5H7M2.2 6.5C6 1 14 2 13.5 8C13.2 11 10 12.5 7 15.5', '#e8e8e8', 1.3)" />
      <svg class="undo" width="16" height="17" viewBox="0 0 16 17" v-html="ln('M14 1.5V6.5H9M13.8 6.5C10 1 2 2 2.5 8C2.8 11 6 12.5 9 15.5', '#6e6d6b', 1.3)" />
      <span class="wtitle">Untitled - Power BI Desktop</span>
      <div class="tsearch">
        <svg width="18" height="18" viewBox="0 0 18 18"><circle cx="11" cy="6.5" r="5.3" fill="none" stroke="#33413f" stroke-width="1.3" /><path d="M7.200 10.300L1 16.500" stroke="#33413f" stroke-width="1.4" /></svg>
        <span>Search</span>
      </div>
      <div class="wright">
        <span class="signin">Sign in</span>
        <svg class="avatar" width="20" height="20" viewBox="0 0 20 20"><circle cx="10" cy="10" r="10" fill="#f3f2f1" /><circle cx="10" cy="5.8" r="2.7" fill="none" stroke="#201f1e" stroke-width="1.5" /><path d="M4.5 10.5H15.5Q15.5 16.5 10 16.5Q4.5 16.5 4.5 10.5Z" fill="none" stroke="#201f1e" stroke-width="1.5" /></svg>
        <svg class="wbtns" width="100" height="12" viewBox="0 0 100 12"><path d="M0 5.5H10M46.5 1.5V.5H53.5V9.5H52M44.5 3H51.5V11H44.5ZM88 1L98 11M98 1L88 11" fill="none" stroke="#fff" stroke-width="1.2" /></svg>
      </div>
    </header>

    <section class="ribbon">
      <nav class="tabs">
        <span class="tab" style="width:66px">File</span>
        <span class="tab on" style="width:68px"><b>Home</b></span>
        <span class="tab" style="width:67px">Insert</span>
        <span class="tab" style="width:90px">Modeling</span>
        <span class="tab" style="width:62px">View</span>
        <span class="tab" style="width:87px">Optimize</span>
        <span class="tab" style="width:60px">Help</span>
        <span class="tab ctx" style="width:75px">Format</span>
        <span class="tab ctx" style="width:100px">Data / Drill</span>
        <button class="share">
          <svg width="16" height="16" viewBox="0 0 16 16" fill="none" stroke="#fff" stroke-width="1.3"><path d="M1 4V15H13V12M4 11Q4 5.5 10 5.5V2.5L15 7L10 11V8.3Q6 8 4 11Z" /></svg>
          <span>Share</span>
          <svg width="10" height="7" viewBox="0 0 10 7" fill="none" stroke="#fff" stroke-width="1.2"><path d="M1 1L5 5.5L9 1" /></svg>
        </button>
      </nav>
      <div class="groups">
        <div class="group clip">
          <div class="grow">
            <div class="paste">
              <svg width="28" height="31" viewBox="0 0 28 31"><path d="M6 4H1V28H12M16 4H21.5V11" fill="none" stroke="#f3c58c" stroke-width="1.5" /><path d="M6 8V4H8.5Q8.5 1 11 1Q14 1 14 4H16.5V8Z" fill="#fafafa" stroke="#c8c6c4" stroke-width="1.2" /><rect x="13.5" y="12" width="13" height="18" fill="#fafafa" stroke="#a8a6a4" stroke-width="1.3" /></svg>
              <span>Paste</span>
            </div>
            <div class="clipcol">
              <div class="cl"><svg width="16" height="16" viewBox="0 0 16 16"><path d="M4.5 0L9.5 11M11.5 0L6 11" stroke="#3b3a39" stroke-width="1.3" fill="none" /><circle cx="5" cy="13" r="2" fill="none" stroke="#2b88d8" stroke-width="1.3" /><circle cx="10.5" cy="13" r="2" fill="none" stroke="#2b88d8" stroke-width="1.3" /></svg><span>Cut</span></div>
              <div class="cl"><svg width="16" height="16" viewBox="0 0 16 16" fill="none" stroke="#3b3a39" stroke-width="1.2"><path d="M4.5 14H.7V1H9M7 4H12.5L15.5 7V15.5H7ZM12 4V7.5H15.5M9 10H13.5M9 12.5H13.5" /></svg><span>Copy</span></div>
              <div class="cl"><svg width="16" height="16" viewBox="0 0 16 16"><path d="M1 8L7 5L12 10L8 15.5Q4 14 1 8Z" fill="#f7c583" stroke="#d87a00" /><path d="M6 5L9 2L14 7L11.5 10ZM10.5 4L13 .8L15.5 3.2L13 6" fill="#fff" stroke="#3b3a39" stroke-width="1.2" /></svg><span>Format painter</span></div>
            </div>
          </div>
          <div class="gname">Clipboard</div>
        </div>
        <div v-for="g in groups" :key="g.name" class="group" :style="{ width: g.w + 'px' }">
          <div class="grow" :style="{ paddingLeft: g.pad + 'px' }">
            <div v-for="b in g.buttons" :key="b.icon" class="rb" :class="{ off: b.off }" :style="{ width: b.w + 'px' }">
              <svg width="32" height="32" viewBox="0 0 32 32" v-html="big[b.icon]" />
              <span v-for="(l, i) in b.label" :key="i" class="rl">{{ l }}<svg v-if="b.caret && i === 1" class="caret" width="7" height="5" viewBox="0 0 7 5"><path d="M.8 .8L3.5 3.6L6.2 .8" fill="none" stroke="currentColor" stroke-width="1.4" /></svg></span>
            </div>
          </div>
          <div class="gname">{{ g.name }}</div>
        </div>
        <svg class="collapse" width="9" height="6" viewBox="0 0 9 6"><path d="M1 5L4.5 1.5L8 5" fill="none" stroke="#252423" stroke-width="1.8" /></svg>
      </div>
    </section>

    <main class="work">
      <aside class="rail">
        <svg width="40" height="150" viewBox="0 0 40 150" fill="none">
          <path d="M0 0h3v40h-3z" fill="#117865" />
          <path d="M14.5 13V26.5H28M16.5 14.5h2.500v9.500h-2.500zM20.500 18.500h2v5.500h-2zM24.500 14.500h2v9.500h-2z" stroke="#000" stroke-width="1" />
          <path d="M13.5 52.5h15v14h-15zM13.5 55h15M13.5 58.5h15M13.5 62.5h15M18.5 55v11.5M23.5 55v11.5" stroke="#797775" />
          <path d="M12.5 96.5h7v7h-7zM12.5 99.5h7M22.5 91.5h7v7h-7zM22.5 94.5h7M22.5 101.5h7v7h-7zM22.5 104.5h7M16.5 96v-3h6M16.5 104v3h6" stroke="#797775" />
          <path d="M15.5 141V132.5H21L25.5 137V146H24M21 132.5V137H25.5M23 134L27.5 138V145" stroke="#797775" />
          <text x="10.5" y="147.5" font-family="Liberation Sans" font-weight="700" font-size="6.5" fill="#797775">DAX</text>
        </svg>
      </aside>

      <div class="center">
        <div class="warn">
          <svg width="17" height="16" viewBox="0 0 17 16"><path d="M8.5 0L17 14.5Q17 15.5 16 15.5H1Q0 15.5 .2 14.5Z" fill="#c83200" /><path d="M7.7 4.5h1.7v6h-1.7zM7.7 11.7h1.7v1.6h-1.7z" fill="#f5d5c8" /></svg>
          <span class="wmsg">There are pending changes in your queries that haven't been applied.</span>
          <button class="wb" style="width:94px">Apply changes</button>
          <button class="wb" style="width:102px;margin-left:12px">Discard changes</button>
          <svg class="wx" width="11" height="11" viewBox="0 0 11 11"><path d="M.5 .5L10.5 10.5M10.5 .5L.5 10.5" stroke="#3b3a39" stroke-width="1.1" /></svg>
        </div>
        <div class="split">
          <div class="canvaswrap">
            <div class="canvas">
              <svg class="grid" width="1316" height="787" shape-rendering="crispEdges"><path :d="gridPath" fill="#1b1a19" /><path d="M2 770H1316" stroke="#605e5c" stroke-width="2" stroke-dasharray="2 1.8" /></svg>
              <div class="card">
                <div class="num">5.48</div>
                <div class="cap">Average of helpful_reviews</div>
              </div>
              <div class="chart">
                <div class="ctitle">Average of rating by developer_answered</div>
                <svg class="plot" width="468" height="317" viewBox="0 0 468 317">
                  <g stroke="#d0cecc" stroke-width="1.1" stroke-dasharray="1.1 4.48">
                    <path v-for="t in yTicks" :key="t.v" :d="`M57 ${t.y}H458`" />
                    <path d="M57.5 36V271M257.5 36V271M458 36V271" />
                  </g>
                  <text v-for="t in yTicks" :key="t.v" class="tick" x="46" :y="t.y + 4.5" text-anchor="end">{{ t.v }}</text>
                  <text class="tick" x="57.5" y="287" text-anchor="middle">0</text>
                  <text class="tick" x="257.5" y="287" text-anchor="middle">1</text>
                  <text class="tick" x="458" y="287" text-anchor="middle">1</text>
                  <path d="M57 242A5 5 0 0 1 57 252Z" fill="#2b96ff" />
                  <path d="M458 43A5 5 0 0 0 458 53Z" fill="#2b96ff" />
                  <text class="axt" x="257" y="308" text-anchor="middle" textLength="146" lengthAdjust="spacingAndGlyphs">developer_answered</text>
                  <text class="axt" transform="translate(20.500 152.500) rotate(-90)" text-anchor="middle" textLength="120" lengthAdjust="spacingAndGlyphs">Average of rating</text>
                  <g fill="none" stroke="#797775" stroke-width="1.1"><path d="M391 6.5H406L400.5 13V20H396.5V13Z" /><path d="M429 8.5H420.5V20.5H433.5V15M420.5 15.5H426.5V20.5M426.5 14.5L433.5 8M429.5 7.5H433.5V12" /></g>
                  <path d="M447.5 12.5h2.2v2.2h-2.2zM454 12.5h2.2v2.2h-2.2zM460.5 12.5h2.2v2.2h-2.2z" fill="#605e5c" />
                </svg>
                <svg class="handles" width="470" height="319" viewBox="0 0 470 319"><path d="M2 10V2H10M460 2H468V10M2 309V317H10M460 317H468V309" fill="none" stroke="#999" stroke-width="3.5" /><path d="M229 1h12v3h-12zM229 315h12v3h-12zM0 154h4v12h-4zM466 154h4v12h-4z" fill="#999" /></svg>
              </div>
              <div class="hscroll" />
            </div>
            <aside class="filters">
              <div class="fsearchwrap">
                <div class="fsearch">
                  <svg width="16" height="16" viewBox="0 0 16 16"><circle cx="10" cy="5.5" r="4.8" fill="none" stroke="#252423" /><path d="M6.5 9L.8 14.7" stroke="#252423" /></svg>
                  <span>Search</span>
                </div>
              </div>
              <section v-for="s in filterSections" :key="s.title" class="fsec">
                <div class="fhead"><span>{{ s.title }}</span><i>...</i></div>
                <div v-for="c in s.cards" :key="c" class="fcard"><span>{{ c }}</span><span>is (All)</span></div>
                <div class="fcard add"><span>Add data fields here</span></div>
              </section>
            </aside>
          </div>
          <footer class="pages">
            <div class="pv on"><svg width="20" height="16" viewBox="0 0 20 16" fill="none" stroke="#605e5c" stroke-width="1.3"><path d="M1 1H19V11.5H1ZM10 11.5V14.5M6.5 14.5H13.5" /></svg></div>
            <div class="pv ph"><svg width="14" height="21" viewBox="0 0 14 21" fill="none" stroke="#605e5c" stroke-width="1.3"><rect x="1" y="1" width="12" height="19" rx="1.5" /><path d="M6 17.5H8" /></svg></div>
            <svg class="arrows" width="28" height="10" viewBox="0 0 28 10" fill="#c8c6c4"><path d="M5 1V9L1 5ZM23 1V9L27 5Z" /></svg>
            <div class="pt">App Landscape</div>
            <div class="pt cur">Reviews</div>
            <div class="plus"><svg width="12" height="12" viewBox="0 0 12 12"><path d="M6 1V11M1 6H11" stroke="#fff" stroke-width="2.4" /></svg></div>
          </footer>
        </div>
      </div>

      <aside class="vis">
        <div class="phead"><b>Visualizations</b><svg width="13" height="13" viewBox="0 0 13 13" fill="none" stroke="#3b3a39" stroke-width="1.2"><path d="M1 .8L6.2 6.5L1 12.2M6.5 .8L11.7 6.5L6.5 12.2" /></svg></div>
        <div class="bv">Build visual</div>
        <svg class="modes" width="180" height="50" viewBox="0 0 180 50">
          <rect x="8" y="2" width="32" height="32" rx="2" fill="#d2d0ce" />
          <path d="M12 6.5H31" stroke="#252423" stroke-width="1.2" /><rect x="12.5" y="11.5" width="23" height="7" fill="#117865" stroke="#252423" stroke-dasharray="2 1" /><rect x="12.5" y="22.5" width="23" height="7" fill="#117865" stroke="#252423" stroke-dasharray="2 1" />
          <g fill="none" stroke="#605e5c" stroke-width="1.3"><path d="M80.5 26V17.5H85.5V7.5H92.5V20M92.5 12H97V15M80.5 26H84M85.5 17V24" /><path d="M102 15L91 25L88.5 22.5L101 14.5ZM90 24Q86 24 86 29Q92 30 92.5 26" fill="#fff" stroke="#3b3a39" /></g>
          <g fill="none" stroke="#3b3a39" stroke-width="1.4"><circle cx="154" cy="17" r="10" /><path d="M144 17L149 12.5L154 15L162 9.5M149.5 24V18M153.5 25V19.5M157.5 23V17" /><path d="M161 24L167 30" stroke-width="3" /></g>
          <path d="M0 46.5H16.5L24.5 39.5L32.5 46.5H180" fill="none" stroke="#8a8886" />
        </svg>
        <div class="vgrid"><svg v-for="(v, i) in visuals" :key="i" width="18" height="18" viewBox="0 0 18 18" v-html="v" /></div>
        <div class="vmore"><i /><i /><i /></div>
        <div class="wells">
          <template v-for="w in wells" :key="w.label">
            <div class="wlabel">{{ w.label }}</div>
            <div class="well" :style="{ height: w.h + 'px' }">
              <div v-if="w.value" class="pill"><span>{{ w.value }}</span><svg width="26" height="10" viewBox="0 0 26 10" fill="none" stroke="#605e5c"><path d="M.5 2L6 7.5L11.5 2M17.5 1L25 8.5M25 1L17.5 8.5" /></svg></div>
              <span v-else>Add data fields here</span>
            </div>
          </template>
          <div class="drill">Drill through</div>
          <div class="tog"><span>Cross-report</span><div class="sw">Off</div></div>
          <div class="tog"><span>Keep all filters</span><div class="sw on">On</div></div>
          <div class="vscroll" />
        </div>
      </aside>

      <aside class="data">
        <div class="phead"><b>Data</b><svg width="13" height="13" viewBox="0 0 13 13" fill="none" stroke="#3b3a39" stroke-width="1.2"><path d="M1 .8L6.2 6.5L1 12.2M6.5 .8L11.7 6.5L6.5 12.2" /></svg></div>
        <div class="dsearch"><svg width="15" height="15" viewBox="0 0 15 15" fill="none" stroke="#605e5c" stroke-width="1.1"><circle cx="6" cy="6" r="5.3" /><path d="M10 10L14.5 14.5" /></svg><span>Search</span></div>
        <div v-for="t in tables" :key="t" class="trow">
          <svg class="chev" width="7" height="13" viewBox="0 0 7 13"><path d="M.6 .6L6.2 6.5L.6 12.4" fill="none" stroke="#797775" /></svg>
          <svg class="tic" width="13" height="13" viewBox="0 0 13 13" v-html="tableIcon" /><span>{{ t }}</span>
        </div>
        <div class="trow open">
          <svg class="chev" width="12" height="7" viewBox="0 0 12 7"><path d="M.5 .6L6 6.2L11.5 .6" fill="none" stroke="#797775" /></svg>
          <svg class="tic" width="13" height="13" viewBox="0 0 13 13" v-html="tableIcon" /><span>reviews</span>
          <svg class="okb" width="12" height="12" viewBox="0 0 12 12"><circle cx="6" cy="6" r="6" fill="#117865" /><path d="M3.5 6L5.3 7.8L8.6 4.5" fill="none" stroke="#fff" stroke-width="1.3" /></svg>
        </div>
        <div v-for="f in fields" :key="f.name" class="frow">
          <div class="fx"><svg v-if="f.expand" width="7" height="13" viewBox="0 0 7 13"><path d="M.6 .6L6.2 6.5L.6 12.4" fill="none" stroke="#797775" /></svg></div>
          <div class="cb" :class="{ on: f.checked }"><svg v-if="f.checked" width="10" height="8" viewBox="0 0 10 8"><path d="M1 4L3.8 6.8L9 1.2" fill="none" stroke="#fff" stroke-width="1.3" /></svg></div>
          <div class="fi"><svg v-if="f.icon" width="14" height="14" viewBox="0 0 14 14" v-html="fieldIcons[f.icon]" /></div>
          <span>{{ f.name }}</span>
        </div>
      </aside>
    </main>

    <div class="status">
      <span class="pg">Page 2 of 2</span>
      <svg width="110" height="14" viewBox="0 0 110 14"><path d="M7 7.5H107" stroke="#605e5c" stroke-width="1" /><path d="M57 2h4v11h-4z" fill="#605e5c" /><path d="M0 7h4v1.5h-4z" fill="#605e5c" /></svg>
      <svg class="pl" width="9" height="9" viewBox="0 0 9 9"><path d="M4.5 .5V8.5M.5 4.5H8.5" stroke="#605e5c" stroke-width="1.2" /></svg>
      <span class="pct">110%</span>
      <svg class="fit" width="17" height="13" viewBox="0 0 17 13" fill="none" stroke="#605e5c"><path d="M.5 .5H16.5V12.5H.5Z" /><path d="M3 5V3H5.5M11.5 3H14V5M3 8V10H5.5M11.5 10H14V8" /></svg>
    </div>

    <div class="taskbar">
      <svg class="scene" width="1920" height="40" viewBox="0 0 1920 40">
        <rect v-for="(b, i) in blocks" :key="'b' + i" :x="b.x" y="0" :width="b.w" height="40" fill="#26302f" :opacity="b.o" />
        <rect v-for="(l, i) in lights" :key="i" :x="l.x" :y="l.y" :width="l.w" :height="l.h" :fill="l.c" :opacity="l.o" />
        <path d="M970 0L1040 34L1120 40H1010L960 18Z" fill="#2f3538" opacity=".6" />
        <path d="M1450 40Q1560 32 1620 0H1665Q1610 30 1550 40Z" fill="#33383c" opacity=".6" />
        <g font-family="Liberation Serif" fill="#b9bcbe" opacity=".75"><text transform="translate(190 31) scale(-1 1)" font-size="25">MA</text><text transform="translate(134 31) scale(-1 1)" font-size="22">KHA</text><text transform="translate(72 31) scale(-1 1)" font-size="20">EL.</text></g>
      </svg>
      <div v-for="a in apps" :key="a.name" class="ta" :class="a.state"><svg width="32" height="32" viewBox="0 0 32 32" v-html="a.svg" /></div>
      <svg class="tray" width="92" height="20" viewBox="0 0 92 20">
        <path d="M4 12L8 7.5L12 12Z" fill="#fff" />
        <g stroke="#fff" fill="none" stroke-width="1.3"><path d="M25.500 2V6M29 2V6M24.500 6H30V9H24.500ZM27 9V16" /><rect x="32.500" y="3" width="7" height="14" rx="1" /></g><path d="M34.500 5.500h3v9.500h-3z" fill="#fff" />
        <path d="M51 7.5H54L57.5 3V17L54 12.5H51Z" fill="#fff" /><path d="M59.5 7Q61 10 59.5 13M61.5 5Q64 10 61.5 15" stroke="#fff" fill="none" />
        <path d="M75 14h2v3h-2zM78 12h2v5h-2zM81 10h2v7h-2zM84 7h2v10h-2zM87 4h2v13h-2z" fill="#fff" />
      </svg>
      <div class="clock"><span>6:43 PM</span><span>12/28/2024</span></div>
    </div>
  </div>
</template>

<style>
html, body { margin: 0; overflow: hidden; background: #f3f2f1; }
</style>

<style scoped>
.app { width: 1920px; height: 1080px; display: flex; flex-direction: column; overflow: hidden; font-family: "Open Sans", "Noto Sans", sans-serif; font-size: 12px; line-height: 16px; letter-spacing: -0.3px; color: #252423; background: #f3f2f1; }
.app * { box-sizing: border-box; }
svg { display: block; flex: none; overflow: visible; }
button { font: inherit; letter-spacing: inherit; border: 0; padding: 0; color: inherit; }
span, b { white-space: nowrap; }

.titlebar { height: 34px; flex: none; background: #3b3a39; color: #fff; display: flex; align-items: center; position: relative; }
.save { margin-left: 16px; }
.undo { margin-left: 15px; }
.wtitle { margin: 7px 0 0 8px; letter-spacing: -.26px; }
.tsearch { position: absolute; left: 790px; top: 5px; width: 400px; height: 24px; background: #d2d2d2; border-radius: 2px; display: flex; align-items: center; padding-left: 17px; color: #1d524a; font-size: 13.5px; }
.tsearch span { margin-left: 10px; }
.wright { margin-left: auto; display: flex; align-items: center; height: 34px; }
.signin { margin-top: 2px; letter-spacing: -.2px; }
.avatar { margin-left: 10px; }
.wbtns { margin: 2px 15px 0 32px; }

.ribbon { height: 126px; flex: none; background: #fafafa; display: flex; flex-direction: column; position: relative; z-index: 2; box-shadow: 0 1px 3px rgba(0, 0, 0, .28); }
.tabs { height: 31px; display: flex; align-items: stretch; font-size: 13.5px; flex: none; }
.tab { display: flex; align-items: center; justify-content: center; flex: none; padding-top: 1px; position: relative; }
.tab b { font-weight: 600; }
.tab.on b { border-bottom: 3px solid #117865; padding: 7px 0 4px; margin-top: 3px; line-height: 17px; }
.ctx { background: #fff; color: #117865; font-weight: 600; }
.ctx + .ctx { margin-left: 4px; padding-right: 1px; }
.share { margin: 4px 6px 3px auto; width: 84px; height: 24px; background: #117865; color: #fff; border-radius: 3px; display: flex; align-items: center; padding-left: 7px; font-weight: 600; font-size: 12px; letter-spacing: -.5px; }
.share span { margin: 0 5px 0 9px; }
.groups { flex: 1; display: flex; padding-top: 5px; position: relative; }
.group { height: 88px; border-right: 1px solid #d2d0ce; display: flex; flex-direction: column; flex: none; box-sizing: content-box !important; }
.grow { display: flex; height: 77px; }
.gname { text-align: center; font-size: 11px; line-height: 14px; color: #3b3a39; position: relative; top: 2px; }
.clip { width: 160px; }
.clip .grow { padding: 0; }
.paste { width: 52px; padding: 7px 0 0 17px; color: #b8b6b4; }
.paste span { display: block; margin: 2px 0 0 -3px; }
.clipcol { display: flex; flex-direction: column; padding-top: 1px; letter-spacing: -.38px; }
.cl { height: 24px; display: flex; align-items: center; color: #3b3a39; }
.cl span { margin-left: 5px; }
.rb { display: flex; flex-direction: column; align-items: center; padding-top: 6px; color: #3b3a39; flex: none; letter-spacing: -.38px; }
.rb > svg { margin-bottom: 2px; }
.rl { display: flex; align-items: center; height: 16px; }
.rb.off { color: #c1bfbd; }
.caret { margin: 2px 0 0 2px; }
.collapse { position: absolute; right: 5px; bottom: 7px; }

.work { flex: 1; display: flex; min-height: 0; padding-top: 0; }
.rail { width: 41px; border-right: 1px solid #dcdad8; flex: none; }
.center { width: 1517px; flex: none; display: flex; flex-direction: column; }
.warn { height: 33px; flex: none; background: #fff4f1; border-bottom: 1px solid #f3b09c; display: flex; align-items: center; padding: 1px 0 0 14px; }
.warn > svg:first-child { margin-bottom: 2px; }
.wmsg { margin-left: 7px; flex: 1; }
.wb { height: 24px; background: #fff; border-radius: 3px; padding-top: 1px; }
.wx { margin: 2px 10px 0 15px; }
.split { flex: 1; display: flex; flex-direction: column; }
.canvaswrap { height: 787px; display: flex; background: #fff; }
.canvas { width: 1316px; height: 787px; position: relative; flex: none; background: #fff; }
.card { position: absolute; left: 274px; top: 188px; width: 328px; height: 303px; background: #fff; display: flex; flex-direction: column; align-items: center; }
.num { margin-top: 118px; height: 62px; font: 400 60px/62px Roboto, sans-serif; letter-spacing: 0; transform: scaleX(.93); }
.cap { font-size: 17px; letter-spacing: -.2px; line-height: 22px; color: #605e5c; margin-top: 3px; }
.chart { position: absolute; left: 698px; top: 188px; width: 468px; height: 317px; background: #fff; border: 1px solid #c8c6c4; }
.ctitle { position: absolute; left: 5px; top: -1px; font: 400 17.5px/24px Roboto, sans-serif; letter-spacing: .53px; white-space: nowrap; }
.plot { position: absolute; left: -1px; top: -1px; }
.handles { position: absolute; left: -2px; top: -2px; }
.tick { font-size: 12px; fill: #605e5c; }
.axt { font-family: Roboto, sans-serif; font-size: 15px; letter-spacing: 0; fill: #252423; }
.grid { position: absolute; left: 0; top: 0; }
.hscroll { position: absolute; left: 41px; top: 777px; width: 1221px; height: 8px; border-radius: 4px; background: #c8c8c8; }
.filters { width: 201px; border-left: 1px solid #a19f9d; background: #fff; }
.fsearchwrap { height: 48px; border-bottom: 1px solid #a19f9d; padding: 12px 0 0 8px; }
.fsearch { width: 180px; height: 31px; border: 1px solid #a19f9d; border-radius: 2px; display: flex; align-items: center; padding-left: 10px; font-size: 12.5px; }
.fsearch span { margin-left: 13px; }
.fsec { padding: 17px 7px 0 8px; height: 97px; }
.fsec:nth-child(2) { height: 201px; }
.fhead { display: flex; justify-content: space-between; padding-right: 4px; height: 24px; }
.fhead i { font-style: normal; color: #605e5c; letter-spacing: 1px; }
.fcard { height: 46px; border: 1px solid #c8c6c4; border-radius: 2px; padding: 5px 8px 3px; display: flex; flex-direction: column; line-height: 18px; margin-bottom: 6px; width: 184px; letter-spacing: -.36px; }
.add { align-items: center; justify-content: center; letter-spacing: -.3px; }
.pages { flex: 1; display: flex; border-bottom: 1px solid #dcdad8; background: #f3f2f1; }
.pv { width: 24px; margin-left: 10px; display: flex; justify-content: center; padding-top: 6px; }
.pv.on { border-bottom: 3px solid #117865; margin-bottom: 4px; border-radius: 1px; }
.ph { margin-left: 20px; padding-top: 5px; }
.arrows { margin: 13px 6px 0 15px; }
.pt { background: #fff; border-left: 1px solid #b3b0ad; width: 122px; display: flex; align-items: center; justify-content: center; padding-top: 3px; }
.pt.cur { width: 84px; font-weight: 600; border-bottom: 4px solid #117865; padding-top: 7px; letter-spacing: -.45px; }
.plus { margin-left: 1px; width: 39px; background: #117865; display: flex; align-items: center; justify-content: center; padding-bottom: 2px; }

.vis { width: 182px; flex: none; border-left: 1px solid #dcdad8; border-right: 1px solid #dcdad8; border-bottom: 1px solid #dcdad8; display: flex; flex-direction: column; }
.phead { height: 38px; padding: 0 8px; display: flex; justify-content: space-between; align-items: center; font-size: 15.5px; flex: none; }
.phead b { font-weight: 600; margin-top: 0; }
.bv { font-weight: 600; padding-left: 8px; height: 17px; flex: none; letter-spacing: -.4px; }
.vgrid { display: grid; grid-template-columns: repeat(6, 18px); gap: 10px; padding: 8px 0 0 11px; flex: none; }
.vmore { display: flex; gap: 4px; padding: 17px 0 0 12px; height: 37px; flex: none; }
.vmore i { width: 2px; height: 2px; background: #252423; }
.wells { flex: 1; border-top: 1px solid #dcdad8; position: relative; padding-top: 3px; }
.wlabel { height: 32px; line-height: 36px; padding-left: 12px; }
.wlabel:first-child { height: 27px; line-height: 29px; }
.well { margin: 0 6px 0 4px; border: 1px dashed #c1bfbd; background: #fff; padding-left: 10px; line-height: 27px; }
.pill { margin: 3px 2px 0 -8px; height: 23px; border: 1px solid #b3b0ad; border-radius: 2px; background: #ebeae9; display: flex; align-items: center; justify-content: space-between; padding: 0 3px 0 4px; line-height: 21px; letter-spacing: -.36px; }
.drill { font-weight: 600; color: #484644; padding-left: 12px; height: 31px; line-height: 38px; letter-spacing: -.4px; }
.tog { display: flex; align-items: center; padding: 0 22px 0 12px; height: 27px; justify-content: space-between; }
.sw { width: 32px; height: 16px; border: 1px solid #797775; border-radius: 8px; background: #fff; display: flex; align-items: center; font-size: 10px; padding-left: 4px; gap: 2px; color: #605e5c; letter-spacing: -.6px; }
.sw::before { content: ""; width: 9px; height: 9px; border-radius: 50%; background: #605e5c; flex: none; }
.sw.on { background: #117865; border-color: #117865; color: #fff; font-weight: 600; flex-direction: row-reverse; padding: 0 4px; justify-content: flex-start; }
.sw.on::before { background: #fff; }
.vscroll { position: absolute; right: -1px; top: 3px; width: 6px; height: 472px; border-radius: 3px; background: #d2d0ce; }

.data { flex: 1; border-bottom: 1px solid #dcdad8; }
.dsearch { margin: 7px 5px 0 4px; height: 25px; background: #fff; border: 1px solid #d2d0ce; border-bottom: 1px solid #605e5c; border-radius: 4px; display: flex; align-items: center; padding: 0 0 2px 12px; font-size: 13.5px; color: #605e5c; }
.dsearch span { margin-left: 6px; }
.data .dsearch + .trow { margin-top: 9px; }
.trow { height: 24px; display: flex; align-items: center; padding-left: 16px; position: relative; color: #3b3a39; letter-spacing: -.2px; }
.trow .tic { margin: 0 5px 1px 6px; }
.trow .chev { margin-bottom: 1px; }
.trow.open { padding-left: 13px; }
.trow.open .tic { margin-left: 4px; }
.okb { position: absolute; left: 35px; top: 11px; }
.frow { height: 24px; display: flex; align-items: center; color: #3b3a39; letter-spacing: -.2px; }
.frow > span { margin-top: 1px; }
.fx { width: 44px; padding: 0 0 1px 30px; }
.cb { width: 12px; height: 12px; border: 1px solid #797775; border-radius: 2px; margin-bottom: 2px; display: flex; align-items: center; justify-content: center; flex: none; }
.cb.on { background: #117865; border-color: #117865; }
.fi { width: 26px; padding: 0 0 1px 7px; flex: none; }

.status { height: 24px; flex: none; display: flex; align-items: center; color: #484644; padding-left: 4px; border-bottom: 1px solid #000; }
.pg { flex: 1; margin-top: 2px; }
.pl { margin-left: 4px; }
.pct { margin: 0 12px 0 13px; }
.fit { margin-right: 17px; }

.taskbar { height: 40px; flex: none; display: flex; align-items: center; position: relative; background: linear-gradient(90deg, #4c565e 0, #565c60 200px, #5a6062 420px, #54595a 620px, #5c5a50 780px, #5a5c56 960px, #56605f 1050px, #597274 1180px, #5c7678 1340px, #606a5e 1420px, #57676a 1560px, #5a7073 1660px, #4a545b 1720px, #4b545d 1920px); }
.scene { position: absolute; left: 0; top: 0; overflow: hidden; }
.ta { width: 58px; height: 38px; margin-right: 4px; display: flex; align-items: center; justify-content: center; position: relative; flex: none; border: 1px solid transparent; }
.ta:nth-child(2) { width: 50px; margin-right: 2px; }
.active { background: rgba(190, 200, 210, .5); border-color: #f0f0f0; }
.open.ta { background: rgba(190, 200, 210, .25); border-color: rgba(220, 220, 220, .5); }
.tray { margin-left: auto; margin-right: 8px; position: relative; }
.clock { width: 66px; margin-right: 10px; position: relative; display: flex; flex-direction: column; align-items: center; color: #fff; line-height: 17px; margin-top: 2px; letter-spacing: -.45px; }
</style>
